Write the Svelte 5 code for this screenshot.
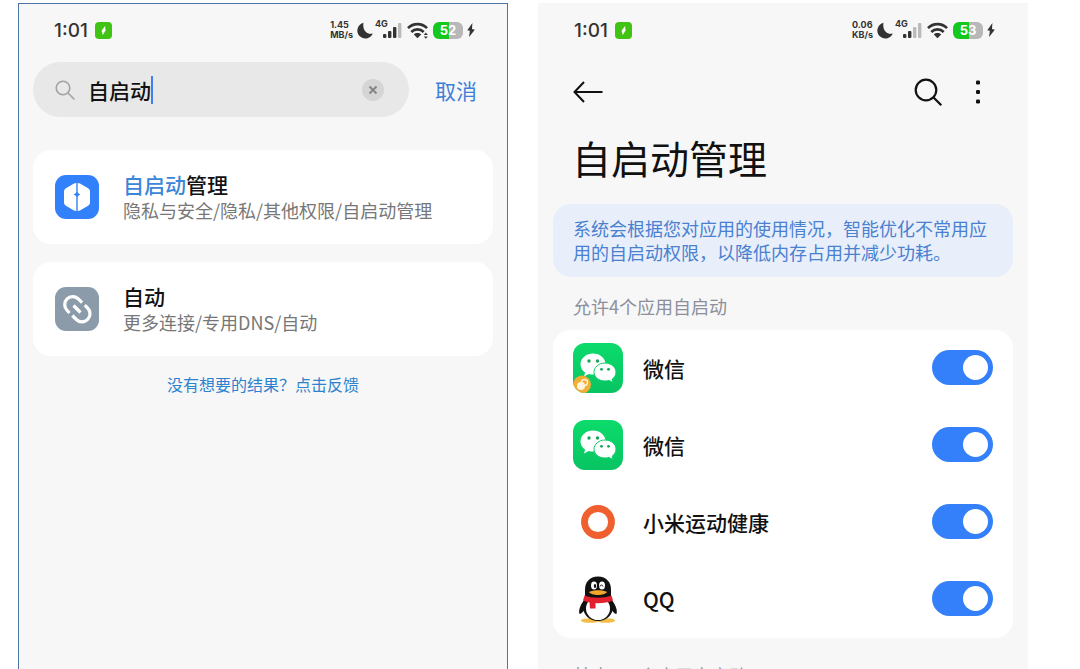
<script lang="ts">
  interface App {
    id: string;
    name: string;
    icon: "wechat" | "ring" | "qq";
    clone?: boolean;
    enabled: boolean;
  }

  let query = $state("自启动");

  let apps = $state<App[]>([
    { id: "wechat-clone", name: "微信", icon: "wechat", clone: true, enabled: true },
    { id: "wechat", name: "微信", icon: "wechat", enabled: true },
    { id: "health", name: "小米运动健康", icon: "ring", enabled: true },
    { id: "qq", name: "QQ", icon: "qq", enabled: true },
  ]);
</script>

{#snippet statusBar(speed: string, unit: string, battery: number, bars: number, linked: boolean)}
  <div class="status-bar">
    <span class="clock">1:01</span>
    <svg class="charge-app" viewBox="0 0 17 17" aria-hidden="true">
      <rect width="17" height="17" rx="4" fill="#41c313" />
      <path d="M10 4 6.600 8.800 7.800 13l2.800-4.800z" fill="#fff" />
    </svg>
    <div class="status-right">
      <span class="net-speed">{speed}<br />{unit}</span>
      <svg class="moon" viewBox="0 0 16 17" aria-hidden="true">
        <path d="M6.500.8A8 8 0 1 0 15.800 11.500C10.500 13.200 5 8.500 6.500.8z" fill="#333" />
      </svg>
      <span class="signal">
        <span class="net-type">4G</span>
        <svg viewBox="0 0 20 17" aria-hidden="true">
          {#each [4, 7, 11, 15] as height, i}
            <rect x={i * 5 + 1} y={16 - height} width="3.4" {height} rx="1" fill={i < bars ? "#333" : "#bbb"} />
          {/each}
        </svg>
      </span>
      <svg class="wifi" viewBox="0 0 21 17" aria-hidden="true">
        <g fill="none" stroke="#333" stroke-width="2.6">
          <path d="M1 6.200C6.200.8 14.800.8 20 6.200" />
          <path d="M4.300 10c3.400-3.500 9-3.500 12.400 0" />
        </g>
        <path d="M6.800 12.500c2-1.900 5.400-1.900 7.400 0L10.500 16.200z" fill="#333" />
        {#if linked}
          <path d="M16.600 10.600h4.400V17h-4.400z" fill="#f7f7f7" />
          <path d="M18.800 10.600 20.800 13h-4zM18.800 16.800l2-2.400h-4z" fill="#333" />
        {/if}
      </svg>
      <span class="battery">{battery}</span>
      <svg class="bolt" viewBox="0 0 8 14" aria-hidden="true">
        <path d="M5.400 0 .3 7.200l2.600.6L2 14l5.800-7.200-2.800-.7z" fill="#333" />
      </svg>
    </div>
  </div>
{/snippet}

{#snippet appIcon(app: App)}
  <svg class="app-icon" viewBox="0 0 50 50" aria-hidden="true">
    {#if app.icon === "wechat"}
      <defs>
        <linearGradient id="bg-{app.id}" x1="0" y1="0" x2="0" y2="1">
          <stop offset="0" stop-color="#0cdb6b" />
          <stop offset="1" stop-color="#08c462" />
        </linearGradient>
        <clipPath id="clip-{app.id}"><rect width="50" height="50" rx="12" /></clipPath>
      </defs>
      <g clip-path="url(#clip-{app.id})">
        <rect width="50" height="50" fill="url(#bg-{app.id})" />
        <path
          d="M20 10.500c-7 0-12.500 4.800-12.500 10.800 0 3.400 1.800 6.300 4.600 8.300L11 33.500l4.800-2.500c1.300.4 2.700.6 4.200.6 7 0 12.500-4.600 12.500-10.400S27 10.500 20 10.500z"
          fill="#fff"
        />
        <path
          d="M32 20c6.200 0 11 4.100 11 9.200 0 2.900-1.500 5.300-3.900 7l.9 3.300-4.100-2.100c-1.200.4-2.500.6-3.900.6-6.200 0-11-3.900-11-8.800S25.800 20 32 20z"
          fill="#fff"
          stroke="#0bcf67"
          stroke-width="1"
        />
        <g fill="#14a75a">
          <circle cx="16" cy="18" r="1.700" />
          <circle cx="24.500" cy="18" r="1.700" />
          <circle cx="28.500" cy="26.300" r="1.400" />
          <circle cx="35.500" cy="26.300" r="1.400" />
        </g>
        {#if app.clone}
          <circle cx="9" cy="41.500" r="9" fill="#f2ae35" />
          <circle cx="8" cy="43" r="4" fill="#fff4dc" />
          <circle cx="11.500" cy="39.500" r="3" fill="none" stroke="#fff4dc" stroke-width="1.400" />
        {/if}
      </g>
    {:else if app.icon === "ring"}
      <circle cx="25" cy="25" r="13.500" fill="none" stroke="#f0602f" stroke-width="6.800" />
    {:else}
      <ellipse cx="17" cy="46.500" rx="9" ry="2.300" fill="#f2bd48" />
      <ellipse cx="33" cy="46.500" rx="9" ry="2.300" fill="#f2bd48" />
      <path d="M12 25C8 30 5.500 35 6.300 39.500c1.200 1.500 4.200-2 5.200-4.500zM38 25c4 5 6.500 10 5.700 14.500-1.200 1.500-4.200-2-5.200-4.500z" fill="#111" />
      <ellipse cx="25" cy="33" rx="15" ry="14" fill="#111" />
      <ellipse cx="25" cy="34.500" rx="12" ry="11.500" fill="#fff" />
      <path d="M25 2.500C16.500 2.500 12 8.500 12 15.500v9h26v-9C38 8.500 33.500 2.500 25 2.500z" fill="#111" />
      <ellipse cx="21" cy="11.500" rx="3" ry="4" fill="#fff" />
      <ellipse cx="29" cy="11.500" rx="3" ry="4" fill="#fff" />
      <ellipse cx="22" cy="12" rx="1.200" ry="1.900" fill="#111" />
      <path d="M27 12.500c.3-2 2.700-2 3 0" fill="none" stroke="#111" stroke-width="1" />
      <path d="M16 18c4-2.200 14-2.200 18 0-2.500 4-15.500 4-18 0z" fill="#f3a72a" />
      <path d="M11.500 21.500c8 3 19 3 27 0l1.500 5c-8 3.500-22 3.500-30 0z" fill="#e3202d" />
      <path d="M16.500 27h6v7.500h-5.500z" fill="#e3202d" />
    {/if}
  </svg>
{/snippet}

<main class="page">
  <section class="phone framed">
    {@render statusBar("1.45", "MB/s", 52, 3, true)}

    <form class="search-row" onsubmit={(e) => e.preventDefault()}>
      <div class="search-box">
        <svg class="search-icon" viewBox="0 0 20 20" aria-hidden="true">
          <g fill="none" stroke="#a2a2a2" stroke-width="1.600" stroke-linecap="round">
            <circle cx="8" cy="8" r="6.800" />
            <path d="m13 13 6 6" />
          </g>
        </svg>
        <div class="query">
          <input type="text" aria-label="搜索" bind:value={query} />
          <span class="caret"></span>
        </div>
        <button type="button" class="clear" aria-label="清除" onclick={() => (query = "")}>
          <svg viewBox="0 0 22 22" aria-hidden="true">
            <circle cx="11" cy="11" r="11" fill="#d5d5d5" />
            <path d="m7.500 7.500 7 7m0-7-7 7" stroke="#858585" stroke-width="2" />
          </svg>
        </button>
      </div>
      <button type="button" class="cancel">取消</button>
    </form>

    <div class="results">
      <a class="result" href="#autostart">
        <svg class="result-icon" viewBox="0 0 44 44" aria-hidden="true">
          <rect width="44" height="44" rx="11" fill="#3380fb" />
          <path
            d="M21.300 8v9c-.4 1.300-1.200 2-2.800 2.500 1.600.4 2.400 1.200 2.800 2.500v14c-1 0-1.900-.2-2.700-.7l-7.300-4.200c-1.500-.9-2.300-2-2.300-3.500V16.400c0-1.500.8-2.600 2.300-3.500l7.300-4.200c.8-.5 1.700-.7 2.700-.7zM22.700 8v9c.4 1.300 1.200 2 2.800 2.500-1.600.4-2.400 1.200-2.800 2.500v14c1 0 1.900-.2 2.700-.7l7.300-4.200c1.500-.9 2.300-2 2.300-3.500V16.400c0-1.500-.8-2.600-2.300-3.500l-7.300-4.200c-.8-.5-1.700-.7-2.700-.7z"
            fill="#fff"
          />
        </svg>
        <span class="result-text">
          <span class="result-title"><mark>自启动</mark>管理</span>
          <span class="result-path">隐私与安全/隐私/其他权限/自启动管理</span>
        </span>
      </a>
      <a class="result" href="#private-dns">
        <svg class="result-icon" viewBox="0 0 44 44" aria-hidden="true">
          <rect width="44" height="44" rx="11" fill="#8c9baa" />
          <g fill="none" stroke="#fff" stroke-width="3.200">
            <path d="M14.500 26 11.800 23a8 8 0 0 1 11.300-11.300l4 4" />
            <path d="M17.300 28.500l4 4A8 8 0 0 0 32.600 21l-2.800-2.900" />
            <path d="m18.500 18.500 7 7" />
          </g>
        </svg>
        <span class="result-text">
          <span class="result-title">自动</span>
          <span class="result-path">更多连接/专用DNS/自动</span>
        </span>
      </a>
    </div>

    <a class="feedback" href="#feedback">没有想要的结果？点击反馈</a>
  </section>

  <section class="phone">
    {@render statusBar("0.06", "KB/s", 53, 2, false)}

    <header class="toolbar">
      <button type="button" class="tool" aria-label="返回">
        <svg viewBox="0 0 30 30" aria-hidden="true">
          <path d="M29.500 15H1.500M11 5 1.500 15 11 25" fill="none" stroke="#111" stroke-width="2" />
        </svg>
      </button>
      <button type="button" class="tool search" aria-label="搜索">
        <svg viewBox="0 0 30 30" aria-hidden="true">
          <g fill="none" stroke="#111" stroke-width="2.200">
            <circle cx="13" cy="13" r="10.300" />
            <path d="m20.300 20.300 8 8" />
          </g>
        </svg>
      </button>
      <button type="button" class="tool" aria-label="更多">
        <svg viewBox="0 0 30 30" aria-hidden="true">
          <g fill="#111">
            <rect x="13" y="3.500" width="4" height="4" rx="1.200" />
            <rect x="13" y="13" width="4" height="4" rx="1.200" />
            <rect x="13" y="22.500" width="4" height="4" rx="1.200" />
          </g>
        </svg>
      </button>
    </header>

    <h1>自启动管理</h1>

    <p class="notice">系统会根据您对应用的使用情况，智能优化不常用应用的自启动权限，以降低内存占用并减少功耗。</p>

    <h2>允许4个应用自启动</h2>

    <ul class="app-list">
      {#each apps as app (app.id)}
        <li>
          <label class="app-row">
            {@render appIcon(app)}
            <span class="app-name">{app.name}</span>
            <input type="checkbox" class="switch" role="switch" bind:checked={app.enabled} />
          </label>
        </li>
      {/each}
    </ul>

    <h2 class="blocked">禁止117个应用自启动</h2>
  </section>
</main>

<style>
  :global(body) {
    background: #fff;
  }

  .page {
    display: grid;
    grid-template-columns: 1fr 1fr;
    gap: 30px;
    height: 100vh;
    overflow: hidden;
    box-sizing: border-box;
    padding: 3px 52px 0 18px;
    font-family: "Noto Sans CJK SC", sans-serif;
    color: #111;
  }

  .phone {
    min-width: 0;
    padding: 0 14px;
    background: #f7f7f7;
    border: 1px solid #f7f7f7;
    border-bottom: 0;
  }

  .framed {
    border-color: #4d75a3;
  }

  button {
    padding: 0;
    border: 0;
    background: none;
    font: inherit;
    cursor: pointer;
  }

  button svg {
    display: block;
    width: 100%;
    height: 100%;
  }

  a {
    color: inherit;
    text-decoration: none;
  }

  .status-bar {
    display: flex;
    align-items: center;
    height: 24px;
    padding: 14px 18px 0 21px;
  }

  .clock {
    font-family: Inter, sans-serif;
    font-size: 19px;
    font-weight: 500;
    color: #333;
  }

  .charge-app {
    width: 17px;
    height: 17px;
    margin-left: 7px;
  }

  .status-right {
    display: flex;
    align-items: center;
    margin-left: auto;
  }

  .net-speed {
    font-family: Inter, sans-serif;
    font-size: 9px;
    font-weight: 700;
    line-height: 10px;
    color: #333;
  }

  .moon {
    width: 16px;
    height: 17px;
    margin-left: 4px;
  }

  .signal {
    position: relative;
    display: flex;
    justify-content: flex-end;
    width: 28px;
    margin-left: 1px;
  }

  .signal svg {
    width: 20px;
    height: 17px;
  }

  .net-type {
    position: absolute;
    top: -3px;
    left: 1px;
    font-family: Inter, sans-serif;
    font-size: 9px;
    font-weight: 700;
    line-height: 10px;
    color: #333;
  }

  .wifi {
    width: 21px;
    height: 17px;
    margin-left: 5px;
  }

  .battery {
    width: 30px;
    height: 17px;
    margin-left: 5px;
    border-radius: 6px;
    background: linear-gradient(to right, #14c81e 53%, #b8b8b8 53%);
    font-family: Inter, sans-serif;
    font-size: 13px;
    font-weight: 700;
    line-height: 17px;
    text-align: center;
    color: #fff;
  }

  .bolt {
    width: 8px;
    height: 14px;
    margin-left: 4px;
  }

  .search-row {
    display: flex;
    align-items: center;
    gap: 26px;
    margin-top: 20px;
    padding-right: 16px;
  }

  .search-box {
    display: flex;
    flex: 1;
    align-items: center;
    min-width: 0;
    height: 55px;
    box-sizing: border-box;
    padding: 0 25px 0 22px;
    border-radius: 28px;
    background: #e8e8e8;
  }

  .search-icon {
    width: 20px;
    height: 20px;
    margin-right: 13px;
  }

  .query {
    display: flex;
    flex: 1;
    align-items: center;
    min-width: 0;
  }

  .query input {
    field-sizing: content;
    max-width: 100%;
    padding: 0;
    border: 0;
    outline: 0;
    background: none;
    font: inherit;
    font-size: 21px;
    font-weight: 500;
    line-height: 30px;
    color: #111;
    caret-color: transparent;
  }

  .caret {
    width: 2px;
    height: 28px;
    background: #3f7ff0;
  }

  .clear {
    width: 22px;
    height: 22px;
  }

  .cancel {
    font-size: 21px;
    line-height: 30px;
    color: #3f7fd8;
  }

  .results {
    display: grid;
    gap: 18px;
    margin-top: 33px;
  }

  .result {
    display: flex;
    align-items: center;
    gap: 24px;
    height: 94px;
    padding: 0 22px;
    border-radius: 18px;
    background: #fff;
  }

  .result-icon {
    flex-shrink: 0;
    width: 44px;
    height: 44px;
  }

  .result-text {
    display: grid;
  }

  .result-title {
    font-size: 21px;
    font-weight: 500;
    line-height: 26px;
  }

  .result-title mark {
    background: none;
    color: #3b86d8;
  }

  .result-path {
    font-size: 18px;
    line-height: 26px;
    white-space: nowrap;
    color: #777;
  }

  .feedback {
    display: block;
    margin-top: 15px;
    font-size: 16px;
    line-height: 26px;
    text-align: center;
    color: #2d82cf;
  }

  .toolbar {
    display: flex;
    align-items: center;
    gap: 20px;
    margin-top: 35px;
    padding: 0 20px;
  }

  .tool {
    width: 30px;
    height: 30px;
  }

  .tool.search {
    margin-left: auto;
  }

  h1 {
    margin: 22px 0 0 19px;
    font-size: 39px;
    font-weight: 400;
    line-height: 56px;
  }

  .notice {
    margin: 19px 0 0;
    padding: 12px 20px 13px;
    border-radius: 18px;
    background: #e8effb;
    font-size: 18px;
    line-height: 24px;
    color: #4a80d0;
  }

  h2 {
    margin: 16px 0 0 20px;
    font-size: 18px;
    font-weight: 400;
    line-height: 26px;
    color: #8c8f9c;
  }

  h2.blocked {
    margin-top: 24px;
  }

  .app-list {
    margin: 11px 0 0;
    padding: 0;
    border-radius: 18px;
    background: #fff;
    list-style: none;
  }

  .app-row {
    display: flex;
    align-items: center;
    height: 77px;
    padding: 0 20px;
    box-sizing: border-box;
    padding-bottom: 2px;
  }

  .app-icon {
    width: 50px;
    height: 50px;
    margin-right: 20px;
  }

  .app-name {
    font-size: 21px;
    font-weight: 500;
    line-height: 30px;
  }

  .switch {
    appearance: none;
    width: 61px;
    height: 35px;
    margin: 0 0 0 auto;
    padding: 5px;
    box-sizing: border-box;
    border-radius: 18px;
    background: #d8d8d8;
  }

  .switch::before {
    content: "";
    display: block;
    width: 25px;
    height: 25px;
    border-radius: 50%;
    background: #fff;
  }

  .switch:checked {
    background: #3480fa;
  }

  .switch:checked::before {
    margin-left: auto;
  }
</style>
